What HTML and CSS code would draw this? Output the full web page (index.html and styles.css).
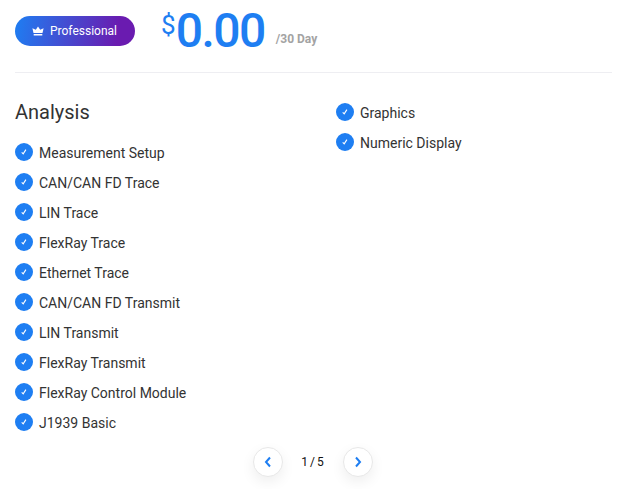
FILE: index.html
```html
<!DOCTYPE html>
<html lang="en">
<head>
<meta charset="utf-8">
<title>Professional plan</title>
<link rel="stylesheet" href="styles.css">
</head>
<body>
<main class="plan">
  <header class="plan-head">
    <div class="badge">
      <svg class="crown" viewBox="0 0 12 10" width="12" height="10"><path d="M6 0.6 8.2 3.7 11.6 2.2 10.5 7H1.5L0.4 2.2 3.8 3.7Z M1.7 7.9H10.3V9.6H1.7Z" fill="#fff"/></svg>
      <span>Professional</span>
    </div>
    <div class="price"><span class="cur">$</span><span class="amount">0.00</span></div>
    <span class="period">/30 Day</span>
  </header>
  <section class="cols">
    <div class="col">
      <h2>Analysis</h2>
      <ul class="list">
        <li><svg class="tick" viewBox="0 0 18 18"><circle cx="9" cy="9" r="9" fill="#1e7ef2"/><path d="M6.7 9.4 8.2 10.9 10.9 6.6" fill="none" stroke="#fff" stroke-width="1.1"/></svg>Measurement Setup</li>
        <li><svg class="tick" viewBox="0 0 18 18"><circle cx="9" cy="9" r="9" fill="#1e7ef2"/><path d="M6.7 9.4 8.2 10.9 10.9 6.6" fill="none" stroke="#fff" stroke-width="1.1"/></svg>CAN/CAN FD Trace</li>
        <li><svg class="tick" viewBox="0 0 18 18"><circle cx="9" cy="9" r="9" fill="#1e7ef2"/><path d="M6.7 9.4 8.2 10.9 10.9 6.6" fill="none" stroke="#fff" stroke-width="1.1"/></svg>LIN Trace</li>
        <li><svg class="tick" viewBox="0 0 18 18"><circle cx="9" cy="9" r="9" fill="#1e7ef2"/><path d="M6.7 9.4 8.2 10.9 10.9 6.6" fill="none" stroke="#fff" stroke-width="1.1"/></svg>FlexRay Trace</li>
        <li><svg class="tick" viewBox="0 0 18 18"><circle cx="9" cy="9" r="9" fill="#1e7ef2"/><path d="M6.7 9.4 8.2 10.9 10.9 6.6" fill="none" stroke="#fff" stroke-width="1.1"/></svg>Ethernet Trace</li>
        <li><svg class="tick" viewBox="0 0 18 18"><circle cx="9" cy="9" r="9" fill="#1e7ef2"/><path d="M6.7 9.4 8.2 10.9 10.9 6.6" fill="none" stroke="#fff" stroke-width="1.1"/></svg>CAN/CAN FD Transmit</li>
        <li><svg class="tick" viewBox="0 0 18 18"><circle cx="9" cy="9" r="9" fill="#1e7ef2"/><path d="M6.7 9.4 8.2 10.9 10.9 6.6" fill="none" stroke="#fff" stroke-width="1.1"/></svg>LIN Transmit</li>
        <li><svg class="tick" viewBox="0 0 18 18"><circle cx="9" cy="9" r="9" fill="#1e7ef2"/><path d="M6.7 9.4 8.2 10.9 10.9 6.6" fill="none" stroke="#fff" stroke-width="1.1"/></svg>FlexRay Transmit</li>
        <li><svg class="tick" viewBox="0 0 18 18"><circle cx="9" cy="9" r="9" fill="#1e7ef2"/><path d="M6.7 9.4 8.2 10.9 10.9 6.6" fill="none" stroke="#fff" stroke-width="1.1"/></svg>FlexRay Control Module</li>
        <li><svg class="tick" viewBox="0 0 18 18"><circle cx="9" cy="9" r="9" fill="#1e7ef2"/><path d="M6.7 9.4 8.2 10.9 10.9 6.6" fill="none" stroke="#fff" stroke-width="1.1"/></svg>J1939 Basic</li>
      </ul>
    </div>
    <div class="col col-side">
      <ul class="list">
        <li><svg class="tick" viewBox="0 0 18 18"><circle cx="9" cy="9" r="9" fill="#1e7ef2"/><path d="M6.7 9.4 8.2 10.9 10.9 6.6" fill="none" stroke="#fff" stroke-width="1.1"/></svg>Graphics</li>
        <li><svg class="tick" viewBox="0 0 18 18"><circle cx="9" cy="9" r="9" fill="#1e7ef2"/><path d="M6.7 9.4 8.2 10.9 10.9 6.6" fill="none" stroke="#fff" stroke-width="1.1"/></svg>Numeric Display</li>
      </ul>
    </div>
  </section>
  <nav class="pager">
    <button class="page-btn" aria-label="Previous"><svg viewBox="0 0 10 12" width="10" height="12"><path d="M7 1.5 3 6 7 10.5" fill="none" stroke="#1e7ef2" stroke-width="2"/></svg></button>
    <span class="page-num">1 / 5</span>
    <button class="page-btn" aria-label="Next"><svg viewBox="0 0 10 12" width="10" height="12"><path d="M3 1.5 7 6 3 10.5" fill="none" stroke="#1e7ef2" stroke-width="2"/></svg></button>
  </nav>
</main>
</body>
</html>
```
FILE: styles.css
```css
* { box-sizing: border-box; }
html, body { margin: 0; height: 100%; background: #fff; overflow: hidden; }
body { font-family: Roboto, "Liberation Sans", sans-serif; color: #333; }
.plan { width: 597px; margin-left: 15px; }
.plan-head { display: flex; align-items: flex-start; height: 73px; border-bottom: 1px solid #eeeef2; }
.badge { display: flex; align-items: center; width: 120px; height: 30px; margin-top: 16px; padding-left: 17px; gap: 6px; border-radius: 15px; background: linear-gradient(100deg, #1e7ef2, #6a1bb0 85%); color: #fff; font-size: 12px; }
.crown { flex: none; }
.price { display: flex; margin-left: 26px; color: #1e7ef2; }
.cur { font-size: 26px; line-height: 30px; margin-top: 10px; font-weight: 400; }
.amount { font-size: 48px; line-height: 56px; margin-top: 3px; font-weight: 500; letter-spacing: -1.5px; }
.period { margin: 32px 0 0 11px; font-size: 12px; line-height: 14px; font-weight: 700; color: #a3a3a3; }
.cols { display: flex; height: 374px; padding-top: 26px; }
.col { flex: 0 0 321px; }
.col-side { flex: 1 1 auto; }
.col h2 { margin: 0 0 18px; font-size: 20px; line-height: 26px; font-weight: 400; }
.list { margin: 0; padding: 0; list-style: none; display: flex; flex-direction: column; gap: 10px; }
.list li { display: flex; align-items: center; gap: 6px; height: 20px; font-size: 14px; }
.col-side .list { margin-top: 4px; }
.tick { width: 18px; height: 18px; flex: none; margin-bottom: 2px; }
.pager { display: flex; justify-content: center; align-items: center; height: 30px; gap: 10px; padding-right: 2px; }
.page-btn { display: flex; align-items: center; justify-content: center; width: 30px; height: 30px; padding: 0; background: #fff; border: 1px solid #e8e8e8; border-radius: 50%; box-shadow: 0 5px 14px rgba(0,0,0,.07); }
.page-num { width: 40px; text-align: center; font-size: 12px; color: #111; word-spacing: -1px; }
```
